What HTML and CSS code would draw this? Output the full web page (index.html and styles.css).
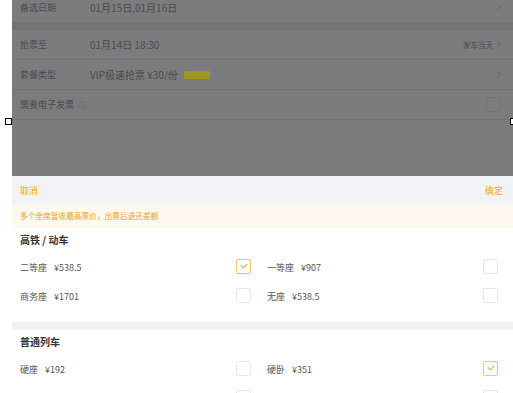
FILE: index.html
```html
<!DOCTYPE html>
<html lang="zh-CN">
<head>
  <title>选择坐席</title>
  <meta name="viewport" content="width=device-width, initial-scale=1">
  <meta charset="UTF-8">
  <link rel="stylesheet" href="styles.css">
</head>
<body>
  <span class="handle handle-left"></span>
  <span class="handle handle-right"></span>

  <div class="frame">
    <!-- page behind the mask -->
    <div class="page">
      <div class="form-row first">
        <span class="form-label">备选日期</span>
        <span class="form-value">01月15日,01月16日</span>
        <span class="form-extra"><span class="chevron"></span></span>
      </div>
      <div class="form-gap"></div>
      <div class="form-row">
        <span class="form-label">抢票至</span>
        <span class="form-value">01月14日 18:30</span>
        <span class="form-extra"><small>发车当天</small><span class="chevron"></span></span>
      </div>
      <div class="form-row">
        <span class="form-label">套餐类型</span>
        <span class="form-value">VIP极速抢票 ¥30/份 <span class="badge">推荐</span></span>
        <span class="form-extra"><span class="chevron"></span></span>
      </div>
      <div class="form-row">
        <span class="form-label">需要电子发票 <span class="info">i</span></span>
        <span class="form-value"></span>
        <span class="form-extra"><span class="dim-box"></span></span>
      </div>
    </div>

    <!-- bottom sheet -->
    <div class="sheet">
      <div class="sheet-head">
        <span>取消</span>
        <span>确定</span>
      </div>
      <div class="notice">多个坐席暂收最高票价，出票后退还差额</div>

      <div class="group">
        <div class="group-title">高铁 / 动车</div>
        <div class="seats">
          <div class="seat"><span>二等座<em>¥538.5</em></span><span class="box checked"></span></div>
          <div class="seat"><span>一等座<em>¥907</em></span><span class="box"></span></div>
          <div class="seat"><span>商务座<em>¥1701</em></span><span class="box"></span></div>
          <div class="seat"><span>无座<em>¥538.5</em></span><span class="box"></span></div>
        </div>
      </div>

      <div class="group-gap"></div>

      <div class="group">
        <div class="group-title">普通列车</div>
        <div class="seats">
          <div class="seat"><span>硬座<em>¥192</em></span><span class="box"></span></div>
          <div class="seat"><span>硬卧<em>¥351</em></span><span class="box checked"></span></div>
          <div class="seat"><span></span><span class="box"></span></div>
          <div class="seat"><span></span><span class="box"></span></div>
        </div>
      </div>
    </div>
  </div>
</body>
</html>
```

FILE: styles.css
```css
body {
  font-family: "Noto Sans CJK SC", "Noto Sans", sans-serif;
  margin: 0;
  padding: 0;
  background: white;
  overflow: hidden;
  position: relative;
}
.frame {
  margin-left: 12px;
  height: 393px;
  overflow: hidden;
}
.handle {
  position: absolute;
  top: 118px;
  width: 5px;
  height: 5px;
  border: 1px solid #000;
  background: white;
  z-index: 5;
}
.handle-left {
  left: 5px;
}
.handle-right {
  left: 510px;
}

/* dimmed page */
.page {
  height: 176px;
  background: #7b7c7e;
  overflow: hidden;
}
.form-row {
  display: flex;
  align-items: center;
  height: 29px;
  padding: 0 11px 0 8px;
  border-bottom: 1px solid #727375;
  color: #4a4a4b;
  font-size: 9px;
}
.form-row.first {
  margin-top: -7px;
  border-bottom: none;
}
.form-gap {
  height: 8px;
  background: #737476;
}
.form-label {
  width: 70px;
  display: flex;
  align-items: center;
  gap: 4px;
}
.form-value {
  flex: 1;
  font-size: 10px;
  display: flex;
  align-items: center;
  gap: 6px;
}
.form-extra {
  display: flex;
  align-items: center;
  gap: 2px;
}
.form-extra small {
  font-size: 7.5px;
}
.chevron {
  width: 4px;
  height: 4px;
  border-top: 1px solid #6b6c6e;
  border-right: 1px solid #6b6c6e;
  transform: rotate(45deg);
  margin-right: 2px;
}
.badge {
  display: inline-block;
  width: 26px;
  height: 8px;
  background: #a39426;
  color: #a39426;
  font-size: 5px;
  line-height: 8px;
  border-radius: 1px;
}
.info {
  display: inline-block;
  width: 6px;
  height: 6px;
  border: 1px solid #6e6f71;
  border-radius: 50%;
  font-size: 5px;
  line-height: 6px;
  text-align: center;
  color: #6e6f71;
}
.dim-box {
  width: 13px;
  height: 13px;
  border: 1px solid #727375;
  border-radius: 2px;
  margin-right: 1px;
}

/* sheet */
.sheet {
  background: white;
}
.sheet-head {
  display: flex;
  justify-content: space-between;
  align-items: center;
  height: 29px;
  padding: 0 10px 0 8px;
  background: #f1f3f6;
  color: #f5a623;
  font-size: 9px;
  line-height: 1;
}
.notice {
  height: 23px;
  line-height: 22px;
  padding-left: 8px;
  background: #fef8ee;
  color: #f0a030;
  font-size: 7.7px;
}
.group {
  padding: 0 15px 0 8px;
}
.group-title {
  height: 25px;
  line-height: 24px;
  font-size: 10px;
  font-weight: bold;
  color: #333;
}
.seats {
  display: grid;
  grid-template-columns: 1fr 1fr;
  column-gap: 16px;
  padding-bottom: 11px;
}
.seat {
  display: flex;
  justify-content: space-between;
  align-items: center;
  height: 29px;
  font-size: 9px;
  color: #555;
}
.seat em {
  font-style: normal;
  margin-left: 7px;
}
.box {
  width: 13px;
  height: 13px;
  border: 1px solid #e8e8e8;
  border-radius: 2px;
  position: relative;
  margin-top: -2px;
}
.box.checked {
  border-color: #f5c65a;
}
.box.checked::after {
  content: "";
  position: absolute;
  left: 4px;
  top: 3px;
  width: 5px;
  height: 3px;
  border-left: 1px solid #f5a623;
  border-bottom: 1px solid #f5a623;
  transform: rotate(-45deg);
}
.group-gap {
  height: 8px;
  background: #f2f2f2;
}
```
